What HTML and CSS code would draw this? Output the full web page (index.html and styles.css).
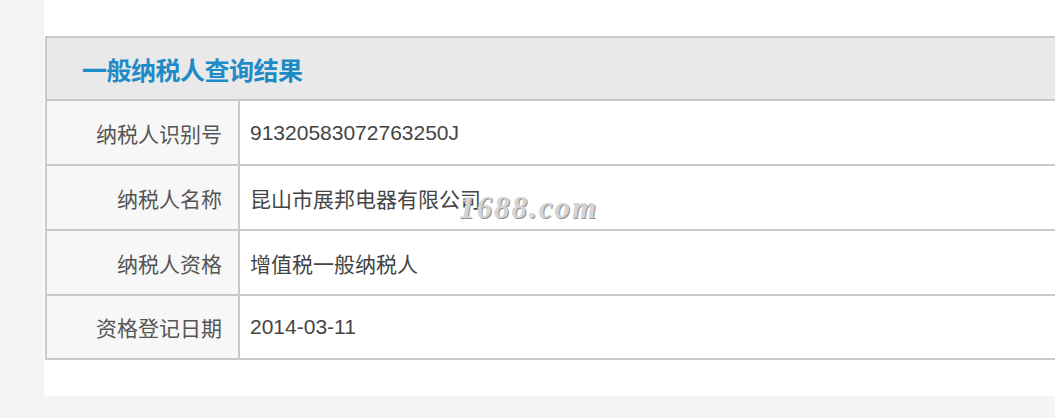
FILE: index.html
```html
<!DOCTYPE html>
<html lang="zh">
<head>
<meta charset="utf-8">
<title>一般纳税人查询结果</title>
<link rel="stylesheet" href="styles.css">
</head>
<body>
<div class="page">
  <div class="panel">
    <div class="result">
      <div class="result-head"><h2 class="result-title">一般纳税人查询结果</h2></div>
      <div class="row">
        <div class="label">纳税人识别号</div>
        <div class="value">91320583072763250J</div>
      </div>
      <div class="row">
        <div class="label">纳税人名称</div>
        <div class="value">昆山市展邦电器有限公司<span class="watermark">1688.com</span></div>
      </div>
      <div class="row">
        <div class="label">纳税人资格</div>
        <div class="value">增值税一般纳税人</div>
      </div>
      <div class="row row-last">
        <div class="label">资格登记日期</div>
        <div class="value">2014-03-11</div>
      </div>
    </div>
  </div>
</div>
</body>
</html>
```

FILE: styles.css
```css
html, body {
  margin: 0;
  padding: 0;
}
body {
  background: #f4f4f4;
  font-family: "Liberation Sans", Arial, "Noto Sans CJK SC", sans-serif;
  overflow: hidden;
  width: 1055px;
  height: 418px;
}
.page {
  padding-left: 44px;
}
.panel {
  background: #ffffff;
  width: 1100px;
  height: 360px;
  padding-top: 36px;
}
.result {
  margin-left: 1px;
  border: 2px solid #c9c9c9;
  border-right: none;
}
.result-head {
  height: 61px;
  background: #e9e9e9;
  border-bottom: 2px solid #c9c9c9;
  display: flex;
  align-items: center;
  padding-left: 35px;
}
.result-title {
  margin: 0;
  font-size: 25px;
  font-weight: bold;
  color: #1e8bc8;
  letter-spacing: -0.5px;
}
.row {
  display: grid;
  grid-template-columns: 193px 1fr;
  height: 63px;
  border-bottom: 2px solid #c9c9c9;
}
.row-last {
  height: 62px;
  border-bottom: none;
}
.label {
  background: #f7f7f7;
  border-right: 2px solid #c9c9c9;
  text-align: right;
  padding-right: 16px;
  font-size: 21px;
  color: #555555;
  display: flex;
  align-items: center;
  justify-content: flex-end;
}
.value {
  position: relative;
  padding-left: 10px;
  font-size: 21px;
  color: #444444;
  display: flex;
  align-items: center;
}
.watermark {
  position: absolute;
  left: 219px;
  top: 26px;
  font-family: "Liberation Serif", "Times New Roman", serif;
  font-style: italic;
  font-weight: bold;
  font-size: 31px;
  line-height: 1;
  letter-spacing: 2px;
  color: #d4d4d4;
  text-shadow: 1px 1px 0 #939393;
}
```
